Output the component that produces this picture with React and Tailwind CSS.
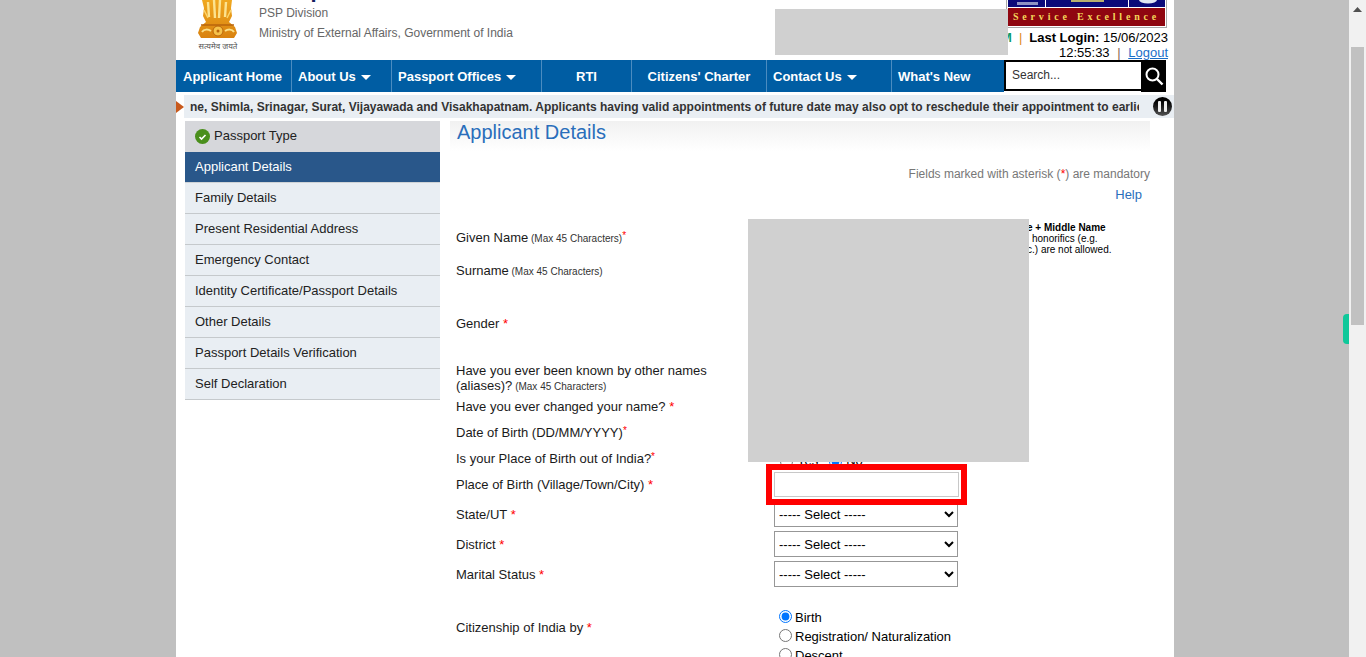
const arial = "font-['Liberation_Sans',Arial,sans-serif]";

const navItems = [
  { label: "Applicant Home", cls: "w-[116px] pl-[7px]" },
  { label: "About Us", cls: "w-[100px] pl-[6px]", caret: true },
  { label: "Passport Offices", cls: "w-[150px] pl-[6px]", caret: true },
  { label: "RTI", cls: "w-[90px] justify-center" },
  { label: "Citizens' Charter", cls: "w-[135px] justify-center" },
  { label: "Contact Us", cls: "w-[125px] pl-[6px]", caret: true },
  { label: "What's New", cls: "w-[112px] pl-[6px]" },
];

const steps = [
  "Family Details",
  "Present Residential Address",
  "Emergency Contact",
  "Identity Certificate/Passport Details",
  "Other Details",
  "Passport Details Verification",
  "Self Declaration",
];

const Req = () => <span className="text-[#ff0000]"> *</span>;
const Sup = () => <sup className="text-[#ff0000] text-[10px] top-[-3px]">*</sup>;
const Max = () => <span className="text-[10px] text-[#333]"> (Max 45 Characters)</span>;

const Emblem = () => (
  <svg width="46" height="52" viewBox="0 0 46 52" className="shrink-0">
    <defs>
      <linearGradient id="gold" x1="0" y1="0" x2="0" y2="1">
        <stop offset="0" stopColor="#f0a820" />
        <stop offset="1" stopColor="#d9820f" />
      </linearGradient>
    </defs>
    <path d="M7 0h30l-1 8 1 8-3 6 6 5 2 6-3 5H6l-3-5 2-6 6-5-3-6 1-8z" fill="url(#gold)" />
    <path d="M13 2l1 15M19 0l1 18M25 0l-1 18M31 2l-1 15" stroke="#fce38f" strokeWidth="2.4" fill="none" />
    <path d="M9 10l4 8M36 10l-4 8" stroke="#fbd56b" strokeWidth="1.5" />
    <path d="M6 25h33" stroke="#b9650c" strokeWidth="1.5" />
    <circle cx="23" cy="31" r="5" fill="#f6c24a" stroke="#b9650c" />
    <circle cx="23" cy="31" r="1.5" fill="#b9650c" />
    <path d="M7 32c2-3 6-3 9-1M39 32c-2-3-6-3-9-1" stroke="#fbe08a" strokeWidth="2" fill="none" />
    <text x="23" y="49" textAnchor="middle" fontSize="8" fill="#555" fontFamily="'Noto Sans','DejaVu Sans',sans-serif">सत्यमेव जयते</text>
  </svg>
);

// strip of the badge that shows above the red band
const BadgeTop = () => (
  <svg width="157" height="8" viewBox="0 0 157 8" className="block shrink-0">
    <rect width="157" height="8" fill="#fff" />
    <rect width="37" height="7" fill="#0a0a7a" />
    <rect x="38" width="82" height="7" fill="#0a0a7a" />
    <rect x="121" width="36" height="7" fill="#0a0a7a" />
    <rect x="9" y="2" width="21" height="3" fill="#8f93c4" />
    <rect x="63" width="33" height="2" fill="#b8b070" />
    <ellipse cx="140" cy="0" rx="9" ry="3.5" fill="#dfe6f2" />
  </svg>
);

const Select = () => (
  <select className="w-[184px] h-[26px] border border-[#979797] bg-white text-[13px] text-black">
    <option>----- Select -----</option>
  </select>
);

const Radio = ({ checked }) => (
  <input type="radio" defaultChecked={checked} className="w-[13px] h-[13px] shrink-0" />
);

const Row = ({ label, height, labelClass = "", children }) => (
  <div className={`${height} flex items-center`}>
    <div className={`w-[318px] shrink-0 ${labelClass}`}>{label}</div>
    {children}
  </div>
);

export default function App() {
  return (
    <div className={`${arial} relative h-[657px] w-[1366px] overflow-hidden bg-[#c0c0c0] flex`}>
      <div className="w-[176px] shrink-0" />

      <div className="w-[998px] shrink-0 bg-white h-full">
        {/* header */}
        <div className="h-[60px] flex">
          <div className="pl-[19px]">
            <Emblem />
          </div>
          <div className="pl-[18px] text-[12px] text-[#666] leading-[20px]">
            <div className="text-[22px] font-bold leading-[26px] -mt-[23px] text-[#14205f]">Passport Seva</div>
            <div>PSP Division</div>
            <div>Ministry of External Affairs, Government of India</div>
          </div>
          <div className="ml-auto mr-[5px] w-[164px] flex flex-col items-end">
            <div className="w-[161px] h-[28px] mr-[2px] border border-[#a9a9a9] border-t-0 flex flex-col px-[1px] pb-[1px]">
              <BadgeTop />
              <div className="flex-1 bg-[#8f0610] text-[#f4d75a] text-[10px] font-bold tracking-[3.8px] font-['Liberation_Serif',serif] text-center leading-[18px] whitespace-nowrap">
                Service Excellence
              </div>
            </div>
            <div className="text-[13px] leading-[15px] mt-[2px] text-right text-black whitespace-nowrap mr-[1px]">
              <span className="text-[#0f9a6a] font-bold">M</span>
              <span className="text-[#e08a1c] mx-[7px]">|</span>
              <b>Last Login:</b> 15/06/2023
            </div>
            <div className="text-[13px] leading-[15px] text-right text-black whitespace-nowrap mr-[1px]">
              12:55:33 <span className="text-[#8a6a50] mx-[4px]">|</span>{" "}
              <span className="text-[#1a6fc9] underline">Logout</span>
            </div>
          </div>
        </div>

        {/* nav */}
        <div className="h-[32px] flex text-white font-bold text-[13px]">
          <div className="flex bg-[#005da3]">
            {navItems.map((item) => (
              <div
                key={item.label}
                className={`${item.cls} pt-[2px] shrink-0 flex items-center gap-[5px] border-r border-[#4b8cc0] whitespace-nowrap last:border-r-0`}
              >
                {item.label}
                {item.caret && (
                  <svg width="10" height="5" viewBox="0 0 10 5">
                    <path d="M0 0h10L5 5z" fill="#fff" />
                  </svg>
                )}
              </div>
            ))}
          </div>
          <div className="w-[137px] h-[31px] bg-white border-2 border-black border-r-0 text-[#333] font-normal text-[12px] flex items-center pl-[6px] pb-[2px]">
            Search...
          </div>
          <div className="w-[25px] h-[32px] bg-black flex items-center justify-center">
            <svg width="20" height="20" viewBox="0 0 20 20">
              <circle cx="8.5" cy="8.5" r="6" fill="none" stroke="#fff" strokeWidth="2" />
              <path d="M13 13l5.5 5.5" stroke="#fff" strokeWidth="2.4" />
            </svg>
          </div>
        </div>

        {/* ticker */}
        <div className="mt-[3px] h-[23px] flex items-center relative">
          <svg width="8" height="12" viewBox="0 0 8 12" className="shrink-0">
            <path d="M0 0l8 6-8 6z" fill="#c8591c" />
          </svg>
          <div className="flex-1 h-full bg-[#e9eef3] flex items-center pl-[6px] pr-[35px] text-[12px] font-bold text-[#333] overflow-hidden whitespace-nowrap">
            <span className="overflow-hidden">
              ne, Shimla, Srinagar, Surat, Vijayawada and Visakhapatnam. Applicants having valid appointments of future date may also opt to reschedule their appointment to earlier
            </span>
          </div>
          <div className="absolute right-[2px] top-[2px] w-[19px] h-[19px] rounded-full bg-gradient-to-b from-black to-[#555] flex items-center justify-center gap-[3px]">
            <span className="w-[3px] h-[11px] bg-[#eee] rounded-[1px]" />
            <span className="w-[3px] h-[11px] bg-[#eee] rounded-[1px]" />
          </div>
        </div>

        {/* body */}
        <div className="flex pl-[9px] pt-[3px]">
          {/* left steps */}
          <div className="w-[255px] shrink-0 text-[13px] text-[#222]">
            <div className="h-[31px] bg-[#d6d7db] flex items-center pl-[10px] gap-[4px]">
              <span className="w-[15px] h-[15px] rounded-full bg-[#4a8f1c] flex items-center justify-center">
                <svg width="9" height="8" viewBox="0 0 9 8">
                  <path d="M1.5 4l2 2 4-4" fill="none" stroke="#fff" strokeWidth="1.6" />
                </svg>
              </span>
              <span className="pb-[2px]">Passport Type</span>
            </div>
            <div className="h-[31px] bg-[#29578a] text-white flex items-center pl-[10px] border-b border-[#cfd3d6]">
              Applicant Details
            </div>
            {steps.map((step) => (
              <div key={step} className="h-[31px] bg-[#e9eef3] flex items-center pl-[10px] border-b border-[#c5c9cc]">
                {step}
              </div>
            ))}
          </div>

          {/* form */}
          <div className="w-[700px] ml-[10px] shrink-0 text-[13px] text-[#1a1a1a]">
            <div className="h-[30px] pl-[7px] text-[20px] leading-[22px] text-[#2a6ebb] bg-gradient-to-b from-[#f1f1f1] to-white">
              Applicant Details
            </div>
            <div className="mt-[15px] text-right text-[12px] leading-[16px] text-[#777]">
              Fields marked with asterisk (<span className="text-[#ff0000]">*</span>) are mandatory
            </div>
            <div className="mt-[3px] text-right pr-[8px] text-[13px] leading-[20px] text-[#2a6ebb]">Help</div>

            <div className="pl-[6px]">
              <div className="mt-[16px] h-[33px] flex items-center relative">
                <span>Given Name<Max /><Sup /></span>
                <div className="absolute left-[571px] top-[1px] text-[10px] leading-[11px] text-black whitespace-nowrap">
                  <b>e + Middle Name</b>
                  <br />
                  <span className="pl-[5px]">honorifics (e.g.</span>
                  <br />
                  c.) are not allowed.
                </div>
              </div>
              <div className="h-[33px] flex items-center">
                <span>Surname<Max /></span>
              </div>
              <div className="mt-[20px] h-[33px] flex items-center">
                <span>Gender<Req /></span>
              </div>
              <div className="mt-[23px] leading-[15px]">
                Have you ever been known by other names
                <br />
                (aliases)?<Max />
              </div>
              <Row height="h-[26px]" label={<>Have you ever changed your name?<Req /></>} />
              <Row height="h-[26px]" label={<>Date of Birth (DD/MM/YYYY)<Sup /></>} />
              <Row
                height="h-[26px]"
                label={<>Is your Place of Birth out of India?<Sup /></>}
              >
                <div className="flex items-center gap-[4px] ml-[6px] mt-[4px] text-black">
                  <Radio />
                  <span>Yes</span>
                  <span className="ml-[7px] flex items-center gap-[4px]">
                    <Radio checked />
                    No
                  </span>
                </div>
              </Row>
              <Row height="h-[25px]" label={<>Place of Birth (Village/Town/City)<Req /></>}>
                <input className="w-[185px] h-[25px] border border-[#c8c8c8] bg-white" />
              </Row>
              <div className="mt-[2px]">
                <Row height="h-[30px]" labelClass="pt-[2px]" label={<>State/UT<Req /></>}>
                  <Select />
                </Row>
                <Row height="h-[30px]" labelClass="pt-[2px]" label={<>District<Req /></>}>
                  <Select />
                </Row>
                <Row height="h-[30px]" labelClass="pt-[2px]" label={<>Marital Status<Req /></>}>
                  <Select />
                </Row>
              </div>
              <div className="mt-[18px] flex">
                <div className="w-[318px] shrink-0 pt-[13px] leading-[16px]">
                  Citizenship of India by<Req />
                </div>
                <div className="ml-[5px] text-[13px] text-black">
                  {["Birth", "Registration/ Naturalization", "Descent"].map((label, i) => (
                    <div key={label} className="h-[19px] flex items-center gap-[3px] whitespace-nowrap">
                      <Radio checked={i === 0} />
                      <span className="pt-[2px]">{label}</span>
                    </div>
                  ))}
                </div>
              </div>
            </div>
          </div>
        </div>
      </div>

      {/* scrollbar */}
      <div className="ml-auto w-[17px] h-full bg-[#f1f1f1] flex flex-col items-center">
        <svg width="9" height="5" viewBox="0 0 9 5" className="mt-[7px]">
          <path d="M4.5 0L9 5H0z" fill="#505050" />
        </svg>
        <div className="w-[13px] h-[278px] bg-[#c1c1c1] mt-[35px]" />
      </div>

      {/* redacted blocks */}
      <div className="absolute left-[775px] top-[9px] w-[233px] h-[46px] bg-[#d0d0d0]" />
      <div className="absolute left-[748px] top-[219px] w-[281px] h-[243px] bg-[#d0d0d0]" />

      {/* red highlight */}
      <div className="absolute left-[766px] top-[464px] w-[201px] h-[41px] border-[6px] border-[#ff0000]" />

      {/* feedback tab */}
      <div className="absolute left-[1343px] top-[314px] w-[6px] h-[30px] rounded-l-[4px] bg-[#0fc89a]" />
    </div>
  );
}
